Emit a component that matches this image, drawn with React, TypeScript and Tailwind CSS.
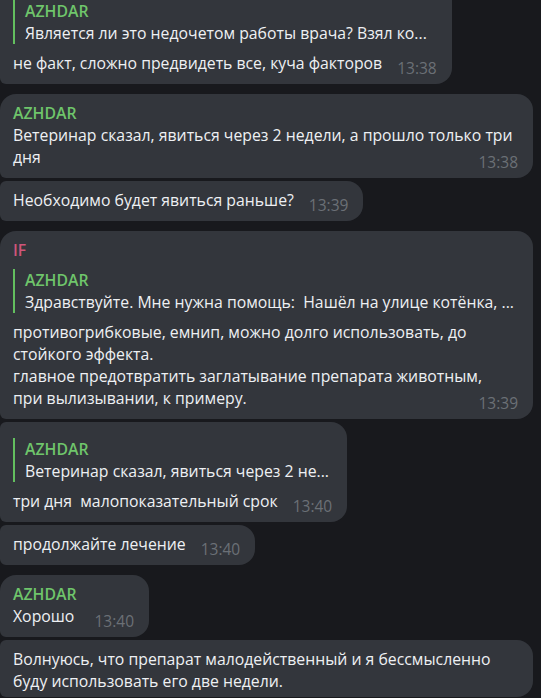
import React from 'react';

type Msg = {
  name?: string;
  nameClass?: string;
  reply?: { name: string; text: string };
  text: string;
  time?: string;
  spacing: string;
  corners: string;
  width?: string;
};

const messages: Msg[] = [
  {
    reply: { name: 'AZHDAR', text: 'Является ли это недочетом работы врача? Взял ко...' },
    text: 'не факт, сложно предвидеть все, куча факторов',
    time: '13:38',
    spacing: '-mt-4',
    corners: 'rounded-r-[16px] rounded-l-[6px]',
  },
  {
    name: 'AZHDAR',
    nameClass: 'text-[#6fc56b]',
    text: 'Ветеринар сказал, явиться через 2 недели, а прошло только три\nдня',
    time: '13:38',
    spacing: 'mt-2.5',
    corners: 'rounded-r-[16px] rounded-tl-[16px] rounded-bl-[6px]',
    width: 'w-[533px]',
  },
  {
    text: 'Необходимо будет явиться раньше?',
    time: '13:39',
    spacing: 'mt-[3px]',
    corners: 'rounded-r-[16px] rounded-l-[6px]',
  },
  {
    name: 'IF',
    nameClass: 'text-[#d0557a]',
    reply: { name: 'AZHDAR', text: 'Здравствуйте. Мне нужна помощь:  Нашёл на улице котёнка, ...' },
    text:
      'противогрибковые, емнип, можно долго использовать, до\nстойкого эффекта.\nглавное предотвратить заглатывание препарата животным,\nпри вылизывании, к примеру.',
    time: '13:39',
    spacing: 'mt-2.5',
    corners: 'rounded-r-[16px] rounded-tl-[16px] rounded-bl-[6px]',
    width: 'w-[533px]',
  },
  {
    reply: { name: 'AZHDAR', text: 'Ветеринар сказал, явиться через 2 не...' },
    text: 'три дня  малопоказательный срок',
    time: '13:40',
    spacing: 'mt-[3px]',
    corners: 'rounded-r-[16px] rounded-l-[6px]',
  },
  {
    text: 'продолжайте лечение',
    time: '13:40',
    spacing: 'mt-[3px]',
    corners: 'rounded-r-[16px] rounded-l-[6px]',
  },
  {
    name: 'AZHDAR',
    nameClass: 'text-[#6fc56b]',
    text: 'Хорошо',
    time: '13:40',
    spacing: 'mt-2.5',
    corners: 'rounded-r-[16px] rounded-tl-[16px] rounded-bl-[6px]',
    width: 'w-[149px]',
  },
  {
    text: 'Волнуюсь, что препарат малодейственный и я бессмысленно\nбуду использовать его две недели.\n',
    spacing: 'mt-[3px]',
    corners: 'rounded-r-[16px] rounded-l-[6px]',
    width: 'w-[533px]',
  },
];

const Bubble: React.FC<{ m: Msg }> = ({ m }) => (
  <div
    className={`${m.spacing} ${m.corners} ${m.width ?? 'max-w-[533px]'} bg-[#33363c] pl-[13px] pr-[15px] pt-2 pb-[5px] text-[15.8px] leading-[22px] text-[#eef0f3]`}
  >
    {m.name && <div className={`font-semibold ${m.nameClass}`}>{m.name}</div>}
    {m.reply && (
      <div className="mt-2 border-l-2 border-[#63bf5f] pl-2.5 [contain:inline-size]">
        <div className="font-semibold text-[#6fc56b] whitespace-nowrap">{m.reply.name}</div>
        <div className="overflow-hidden whitespace-pre">{m.reply.text}</div>
      </div>
    )}
    <p className={`${m.reply ? 'mt-2' : ''} flow-root whitespace-pre-wrap`}>
      {m.text}
      {m.time && (
        <span className="float-right ml-[15px] mt-[5px] text-[15.5px] text-[#6b7076]">{m.time}</span>
      )}
    </p>
  </div>
);

export default function App() {
  return (
    <div className="h-[698px] w-[541px] overflow-hidden bg-[#18191d] pr-2 font-['Open_Sans',sans-serif]">
      <div className="flex flex-col items-start">
        {messages.map((m, i) => (
          <Bubble key={i} m={m} />
        ))}
      </div>
    </div>
  );
}
